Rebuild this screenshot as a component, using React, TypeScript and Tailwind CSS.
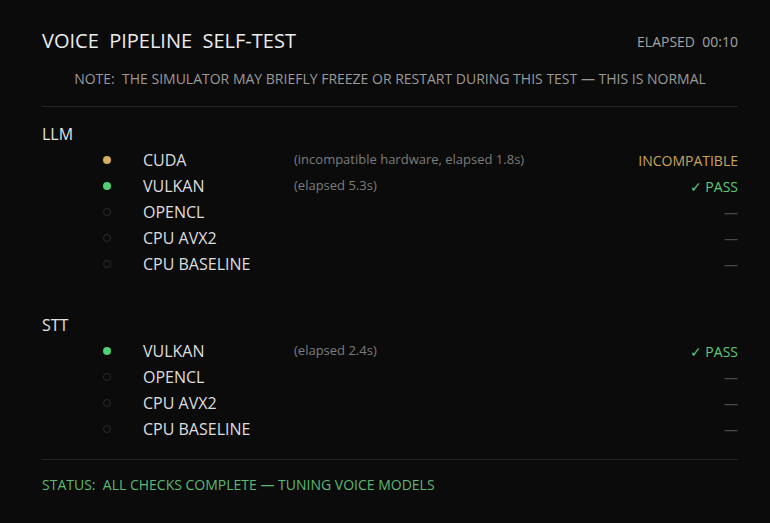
import React from "react"

type Row = {
  name: string
  state: "pass" | "incompatible" | "pending"
  detail?: string
}

const llm: Row[] = [
  { name: "CUDA", state: "incompatible", detail: "(incompatible hardware, elapsed 1.8s)" },
  { name: "VULKAN", state: "pass", detail: "(elapsed 5.3s)" },
  { name: "OPENCL", state: "pending" },
  { name: "CPU AVX2", state: "pending" },
  { name: "CPU BASELINE", state: "pending" },
]

const stt: Row[] = [
  { name: "VULKAN", state: "pass", detail: "(elapsed 2.4s)" },
  { name: "OPENCL", state: "pending" },
  { name: "CPU AVX2", state: "pending" },
  { name: "CPU BASELINE", state: "pending" },
]

function Dot({ state }: { state: Row["state"] }) {
  if (state === "pass") return <span className="block h-2 w-2 rounded-full bg-[#4fd071]" />
  if (state === "incompatible") return <span className="block h-2 w-2 rounded-full bg-[#d4ad62]" />
  return <span className="block h-2 w-2 rounded-full border border-[#2c2c2c]" />
}

function Status({ state }: { state: Row["state"] }) {
  if (state === "pass") return <span className="text-[14px] text-[#5fc977]">✓ PASS</span>
  if (state === "incompatible") return <span className="text-[14px] text-[#c9a45c]">INCOMPATIBLE</span>
  return <span className="text-[14px] text-[#4a4a4a]">—</span>
}

function Section({ label, rows }: { label: string; rows: Row[] }) {
  return (
    <div>
      <div className="flex h-[26px] items-center text-[16px] text-[#e2e2e2]">{label}</div>
      {rows.map((r) => (
        <div key={r.name} className="flex h-[26px] items-center pl-[61px]">
          <Dot state={r.state} />
          <span className="ml-[32px] w-[151px] text-[16px] text-[#dedede]">{r.name}</span>
          <span className="flex-1 text-[13px] text-[#7c7c7c]">{r.detail}</span>
          <Status state={r.state} />
        </div>
      ))}
    </div>
  )
}

export default function App() {
  return (
    <div className="h-[523px] w-[770px] overflow-hidden bg-[#0b0b0b] pl-[42px] pr-[32px] pt-[29px] font-['Open_Sans',sans-serif]">
      <div className="flex h-6 items-center justify-between">
        <h1 className="whitespace-pre text-[20px] text-[#ececec]">VOICE  PIPELINE  SELF-TEST</h1>
        <span className="whitespace-pre text-[14px] text-[#a3a3a3]">ELAPSED  00:10</span>
      </div>

      <p className="mt-[17px] h-[18px] whitespace-pre text-center text-[14px] leading-[18px] text-[#9a9a9a]">
        NOTE:  THE SIMULATOR MAY BRIEFLY FREEZE OR RESTART DURING THIS TEST — THIS IS NORMAL
      </p>

      <div className="mt-[18px] h-px bg-[#262626]" />

      <div className="mt-[14px]">
        <Section label="LLM" rows={llm} />
      </div>

      <div className="mt-[35px]">
        <Section label="STT" rows={stt} />
      </div>

      <div className="mt-[17px] h-px bg-[#262626]" />

      <p className="mt-[16px] whitespace-pre text-[14px] leading-[18px] text-[#5cb872]">
        STATUS:  ALL CHECKS COMPLETE — TUNING VOICE MODELS
      </p>
    </div>
  )
}
